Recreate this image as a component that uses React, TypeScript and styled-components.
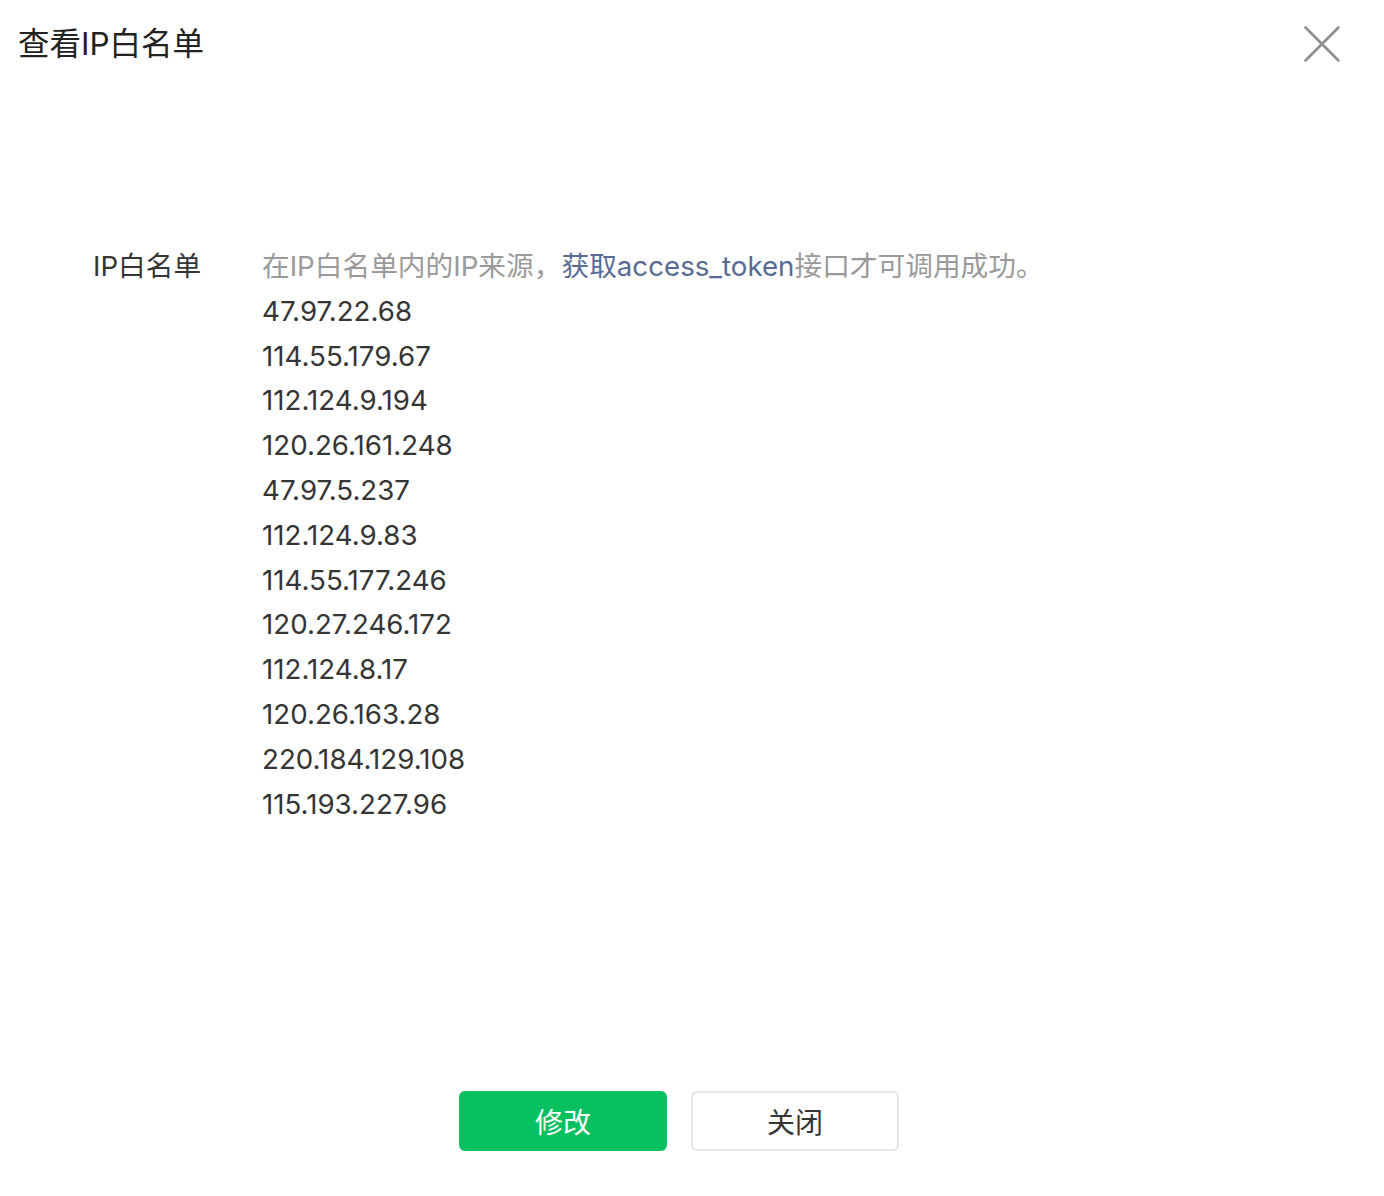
import React from "react";
import styled, { createGlobalStyle } from "styled-components";

const Global = createGlobalStyle`
  html, body { margin: 0; padding: 0; background: #ffffff; }
  body { font-family: "Inter", "Noto Sans CJK SC", sans-serif; color: #353535; }
`;

const Page = styled.div`
  width: 1384px;
  height: 1196px;
  display: flex;
  flex-direction: column;
  background: #fff;
`;

const Header = styled.div`
  height: 88px;
  display: flex;
  align-items: center;
  justify-content: space-between;
  padding: 0 42px 0 18px;
`;

const Title = styled.h1`
  margin: 0;
  font-size: 31.5px;
  font-weight: 400;
  color: #222;
  line-height: 40px;
`;

const CloseButton = styled.button`
  width: 40px;
  height: 40px;
  padding: 0;
  border: none;
  background: transparent;
  display: flex;
  align-items: center;
  justify-content: center;
  cursor: pointer;
`;

const Form = styled.div`
  display: grid;
  grid-template-columns: 169px 1fr;
  padding: 0 0 0 93px;
  margin-top: 156px;
  font-size: 27.7px;
  line-height: 44.8px;
`;

const Label = styled.div`
  color: #353535;
`;

const Content = styled.div`
  display: flex;
  flex-direction: column;
`;

const Hint = styled.div`
  color: #9a9a9a;
`;

const Link = styled.a`
  color: #576b95;
  text-decoration: none;
`;

const Ip = styled.div`
  color: #353535;
`;

const Footer = styled.div`
  margin-top: auto;
  display: flex;
  justify-content: center;
  gap: 24px;
  padding: 0 26px 45px 0;
`;

const Button = styled.button<{ $primary?: boolean }>`
  width: 208px;
  height: 60px;
  border-radius: 6px;
  font-family: inherit;
  font-size: 28px;
  cursor: pointer;
  border: 2px solid ${(p) => (p.$primary ? "#07c160" : "#e5e5ea")};
  background: ${(p) => (p.$primary ? "#07c160" : "#ffffff")};
  color: ${(p) => (p.$primary ? "#ffffff" : "#353535")};
`;

const ips = [
  "47.97.22.68",
  "114.55.179.67",
  "112.124.9.194",
  "120.26.161.248",
  "47.97.5.237",
  "112.124.9.83",
  "114.55.177.246",
  "120.27.246.172",
  "112.124.8.17",
  "120.26.163.28",
  "220.184.129.108",
  "115.193.227.96",
];

export default function App() {
  return (
    <Page>
      <Global />
      <Header>
        <Title>查看IP白名单</Title>
        <CloseButton aria-label="关闭">
          <svg width="38" height="38" viewBox="0 0 38 38">
            <path d="M2.5 2.5 L35.5 35.5 M35.5 2.5 L2.5 35.5" stroke="#8e8e8e" strokeWidth="2.6" strokeLinecap="round" />
          </svg>
        </CloseButton>
      </Header>
      <Form>
        <Label>IP白名单</Label>
        <Content>
          <Hint>
            在IP白名单内的IP来源，<Link href="#">获取access_token</Link>接口才可调用成功。
          </Hint>
          {ips.map((ip) => (
            <Ip key={ip}>{ip}</Ip>
          ))}
        </Content>
      </Form>
      <Footer>
        <Button $primary>修改</Button>
        <Button>关闭</Button>
      </Footer>
    </Page>
  );
}
